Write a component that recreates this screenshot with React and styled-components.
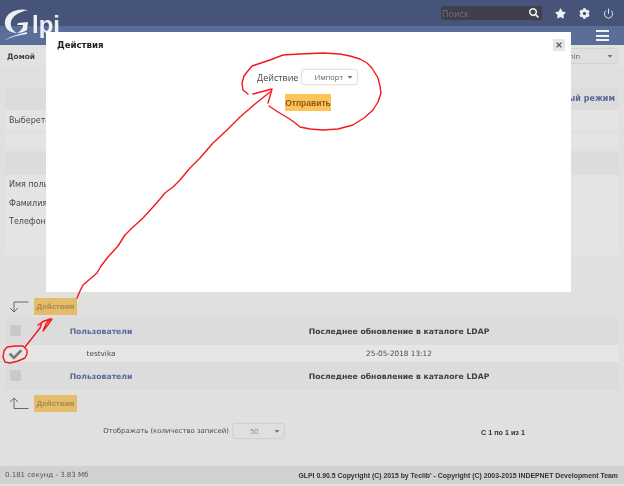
import React from 'react';
import styled, { createGlobalStyle } from 'styled-components';
import { FaStar, FaCog, FaSearch, FaTimes, FaCheck, FaCaretDown } from 'react-icons/fa';
import { Power } from 'lucide-react';

const Global = createGlobalStyle`
  html, body { margin: 0; padding: 0; background: #e0e0de; }
  body { font-family: "DejaVu Sans", Verdana, sans-serif; color: #4a4a4a; }
`;

const Page = styled.div`
  position: relative;
  width: 624px;
  height: 486px;
  overflow: hidden;
  display: flex;
  flex-direction: column;
  background: #e0e0de;
  filter: blur(0.35px);
`;
const TopBar = styled.header`
  height: 26px;
  background: #46547a;
  display: flex;
  align-items: center;
  justify-content: flex-end;
  padding-right: 10px;
  flex: none;
`;
const SearchBox = styled.div`
  width: 101px;
  height: 14px;
  background: #403f4e;
  border-radius: 2px;
  display: flex;
  align-items: center;
  justify-content: space-between;
  padding: 0 3px 0 1px;
  box-sizing: border-box;
  margin-right: 13px;
  color: #72717c;
  font-family: "Open Sans", sans-serif;
  font-size: 9px;
`;
const TopIcon = styled.span`
  color: #f0f1f4;
  display: flex;
  margin-left: ${p => p.$gap}px;
  font-size: ${p => p.$size}px;
`;
const NavBar = styled.nav`
  height: 19px;
  background: #5a6e99;
  flex: none;
  display: flex;
  align-items: center;
  justify-content: flex-end;
  padding-right: 15px;
`;
const Burger = styled.div`
  width: 13px;
  height: 11px;
  display: flex;
  flex-direction: column;
  justify-content: space-between;
  i { display: block; height: 2px; background: #f2f3f6; }
`;
const Crumbs = styled.div`
  height: 22px;
  box-sizing: border-box;
  flex: none;
  display: flex;
  align-items: center;
  justify-content: space-between;
  padding: 0 7px;
  font-size: 7.4px;
  font-weight: bold;
  background: #e2e2e0;
  color: #3f3f3f;
`;
const Select = styled.div`
  width: ${p => p.$w}px;
  height: ${p => p.$h}px;
  box-sizing: border-box;
  background: ${p => p.$bg || '#dfdfdd'};
  border-radius: 2px;
  box-shadow: 0 0 2px ${p => p.$ring || '#a9a9a9'};
  display: flex;
  align-items: center;
  justify-content: space-between;
  padding: 0 3px 0 ${p => p.$pl}px;
  font-family: "Open Sans", sans-serif;
  font-size: 7.5px;
  font-weight: normal;
  color: ${p => p.$color || '#666'};
  svg { font-size: 8px; color: #777; }
`;
const Content = styled.main`
  flex: none;
  padding: ${p => p.$top}px 5px 0;
  display: flex;
  flex-direction: column;
`;
const Band = styled.div`
  height: ${p => p.$h}px;
  margin-bottom: ${p => p.$mb || 0}px;
  background: ${p => (p.$head ? '#dcdcdc' : '#e4e4e4')};
  font-size: 8px;
  display: flex;
  flex-direction: ${p => (p.$stack ? 'column' : 'row')};
  align-items: ${p => (p.$stack ? 'flex-start' : 'center')};
  justify-content: ${p => (p.$end ? 'flex-end' : 'flex-start')};
  padding: ${p => p.$pad || '0 4px'};
  gap: ${p => p.$gap || 0}px;
  box-sizing: border-box;
`;
const ModeLink = styled.span`
  color: #59699a;
  font-weight: bold;
  font-size: 8px;
`;
const ActionRow = styled.div`
  height: ${p => p.$h}px;
  display: flex;
  align-items: center;
  gap: 6px;
  padding-left: 8px;
  margin-top: ${p => p.$mt || 0}px;
`;
const ActionButton = styled.div`
  width: 43px;
  height: 17px;
  background: #e5bc69;
  color: #a98a4e;
  font-size: 8px;
  font-weight: bold;
  display: flex;
  align-items: center;
  justify-content: center;
  font-family: "Liberation Sans", sans-serif;
`;
const Table = styled.div`
  display: grid;
  grid-template-columns: 18px 156px 1fr;
`;
const Cell = styled.div`
  height: ${p => p.$h}px;
  background: ${p => (p.$head ? '#dcdcdc' : '#e6e6e6')};
  display: flex;
  align-items: center;
  justify-content: center;
  font-weight: ${p => (p.$head ? 'bold' : 'normal')};
  color: ${p => (p.$link ? '#59699a' : p.$head ? '#3d3d3d' : '#4a4a4a')};
  font-size: ${p => (p.$head ? 7.7 : 7.3)}px;
`;
const Box = styled.div`
  width: 11px;
  height: 11px;
  background: #c9c9c9;
  border-radius: 2px;
  margin-left: 3px;
  margin-bottom: 2px;
`;
const Tick = styled(FaCheck)`
  color: #7a7a7a;
  font-size: 13px;
  margin-left: 3px;
  margin-top: 2px;
`;
const Pager = styled.div`
  display: grid;
  grid-template-columns: 233px 51px 197px auto;
  align-items: center;
  margin-top: 12px;
  font-size: 6.9px;
  height: 14px;
`;
const PagerLabel = styled.span`
  justify-self: end;
  margin-right: 4px;
  white-space: nowrap;
`;
const PagerCount = styled.b`
  grid-column: 4;
  color: #333;
  font-family: "Liberation Sans", sans-serif;
  font-size: 7.2px;
  margin-top: 3px;
`;
const Footer = styled.footer`
  position: absolute;
  left: 0;
  right: 0;
  bottom: 2px;
  height: 18px;
  background: #d1d1cf;
  display: flex;
  align-items: center;
  justify-content: space-between;
  padding: 0 6px 0 5px;
  font-size: 7px;
  color: #555;
  b { color: #333; font-family: "Liberation Sans", sans-serif; font-size: 6.9px; white-space: nowrap; }
`;
const Modal = styled.section`
  position: absolute;
  left: 46px;
  top: 32px;
  width: 525px;
  height: 260px;
  background: #fff;
  box-sizing: border-box;
  padding: 7px 11px;
`;
const ModalHead = styled.div`
  display: flex;
  justify-content: space-between;
  align-items: flex-start;
  font-size: 8.6px;
  font-weight: bold;
  color: #222;
  height: 15px;
  line-height: 13px;
`;
const Close = styled.div`
  width: 12px;
  height: 12px;
  margin: 0 -5px 0 0;
  background: #e6e6e6;
  display: flex;
  align-items: center;
  justify-content: center;
  color: #666;
  font-size: 8px;
`;
const ModalForm = styled.div`
  margin-top: 16px;
  display: flex;
  flex-direction: column;
  align-items: flex-start;
  padding-left: 200px;
`;
const ActionLine = styled.div`
  display: flex;
  align-items: center;
  gap: 4px;
  font-family: "Open Sans", sans-serif;
  font-size: 9px;
  color: #444;
`;
const Submit = styled.div`
  margin: 10px 0 0 28px;
  width: 46px;
  height: 17px;
  background: #fcc35a;
  color: #8a5a14;
  font-family: "Liberation Sans", sans-serif;
  font-size: 8.5px;
  font-weight: bold;
  display: flex;
  align-items: center;
  justify-content: center;
`;
const Logo = styled.div`
  position: absolute;
  left: 3px;
  top: 7px;
  width: 60px;
  height: 34px;
  svg { position: absolute; left: 0; top: 0; }
`;
const LogoText = styled.span`
  position: absolute;
  left: 29px;
  top: 5px;
  font-family: "Liberation Sans", sans-serif;
  font-size: 24px;
  font-weight: bold;
  line-height: 26px;
  color: #eef0f5;
`;
const Ink = styled.svg`
  position: absolute;
  left: 0;
  top: 0;
  pointer-events: none;
`;

const Arrow = ({ up }) => (
  <svg width="20" height="17" viewBox="0 0 20 17" fill="none" stroke="#6a6a6a" strokeWidth="1" overflow="visible">
    {up
      ? <path d="M6 13.5V3M2 7l4-4 4 4M6 13.5h14.5" />
      : <path d="M6 4v10M2 10l4 4 4-4M6 4h14.5" />}
  </svg>
);

const Row = ({ mark, a, b, head }) => (
  <>
    <Cell $head={head} $h={head ? 28 : 17}>{mark}</Cell>
    <Cell $head={head} $link={head} $h={head ? 28 : 17}>{a}</Cell>
    <Cell $head={head} $h={head ? 28 : 17}>{b}</Cell>
  </>
);

export default function App() {
  return (
    <>
      <Global />
      <Page>
        <TopBar>
          <SearchBox>Поиск<FaSearch color="#f0f1f4" size={10} /></SearchBox>
          <TopIcon $gap={0} $size={11}><FaStar /></TopIcon>
          <TopIcon $gap={13} $size={11}><FaCog /></TopIcon>
          <TopIcon $gap={13} $size={10}><Power size={11} strokeWidth={2} /></TopIcon>
        </TopBar>
        <NavBar><Burger><i /><i /><i /></Burger></NavBar>
        <Crumbs>
          <span>Домой</span>
          <Select $w={64} $h={14} $pl={5}>
            <span>admin</span>
            <FaCaretDown />
          </Select>
        </Crumbs>
        <Content $top={20}>
          <Band $head $h={23} $end><ModeLink>Упрощенный режим</ModeLink></Band>
          <Band $h={21} $mb={3}>Выберете</Band>
          <Band $h={15} $mb={3} />
          <Band $head $h={23} />
          <Band $h={80} $stack $gap={9.5} $pad="5px 4px">
            <span>Имя пользователя</span>
            <span>Фамилия</span>
            <span>Телефон</span>
          </Band>
        </Content>
        <ActionRow $h={17} $mt={43}>
          <Arrow />
          <ActionButton>Действия</ActionButton>
        </ActionRow>
        <Content $top={2}>
          <Table>
            <Row head mark={<Box />} a="Пользователи" b="Последнее обновление в каталоге LDAP" />
            <Row mark={<Tick />} a="testvika" b="25-05-2018 13:12" />
            <Row head mark={<Box />} a="Пользователи" b="Последнее обновление в каталоге LDAP" />
          </Table>
        </Content>
        <ActionRow $h={17} $mt={5}>
          <Arrow up />
          <ActionButton>Действия</ActionButton>
        </ActionRow>
        <Pager>
          <PagerLabel>Отображать (количество записей)</PagerLabel>
          <Select $w={51} $h={14} $pl={17} $color="#888"><span>50</span><FaCaretDown /></Select>
          <span />
          <PagerCount>С 1 по 1 из 1</PagerCount>
        </Pager>
        <Footer>
          <span>0.181 секунд - 3.83 Мб</span>
          <b>GLPI 0.90.5 Copyright (C) 2015 by Teclib' - Copyright (C) 2003-2015 INDEPNET Development Team</b>
        </Footer>
        <Logo>
          <svg width="30" height="34" viewBox="0 0 30 34" fill="#eef0f5">
            <path d="M25 3C16 1 4 4 2 14C1 21 6 26 14 26C10 24 7 20 8 15C9 9 16 5 25 3Z" />
            <path d="M14 26C18 26 21 25 24 23L25 15L15 16L14 18L20 18C20 21 19 23 14 26Z" />
            <path d="M2 33C8 29 16 27 24 25L24 27C16 28 8 30 2 33Z" />
          </svg>
          <LogoText>lpi</LogoText>
        </Logo>
        <Modal>
          <ModalHead>
            <span>Действия</span>
            <Close><FaTimes /></Close>
          </ModalHead>
          <ModalForm>
            <ActionLine>
              Действие
              <Select $w={55} $h={14} $pl={12} $bg="#fff" $ring="#8f8f8f"><span>Импорт</span><FaCaretDown /></Select>
            </ActionLine>
            <Submit>Отправить</Submit>
          </ModalForm>
        </Modal>
        <Ink width="624" height="486" viewBox="0 0 624 486" fill="none" stroke="#f4181c" strokeWidth="1.4" strokeLinejoin="round" strokeLinecap="round">
          <path d="M248 94L243 90 242 83 244 76 247 72 252 66 255 65 270 60 283 55 300 54 323 53 340 54 350 56 360 59 367 63 372 68 378 78 380 86 381 93 378 102 373 110 364 118 353 125 338 129 323 130 310 129 300 127 294 122 288 118 278 112 269 106" />
          <path d="M77 298L80 291 83 285 90 279 97 273 101 266 108 257 118 246 125 235 132 228 143 218 153 207 160 199 165 193 173 187 180 180 190 168 200 158 213 143 226 131 240 117 255 104 270 92" />
          <path d="M253 94L272 89 268 103" />
          <path d="M25 347L33 337 40 328 42 322 50 319 46 324 43 331 47 326 52 319 44 321 38 325" />
          <path d="M7 347L15 346 23 346 27 350 27 354 25 358 18 361 10 363 5 362 3 357 4 351 7 347" />
        </Ink>
      </Page>
    </>
  );
}
